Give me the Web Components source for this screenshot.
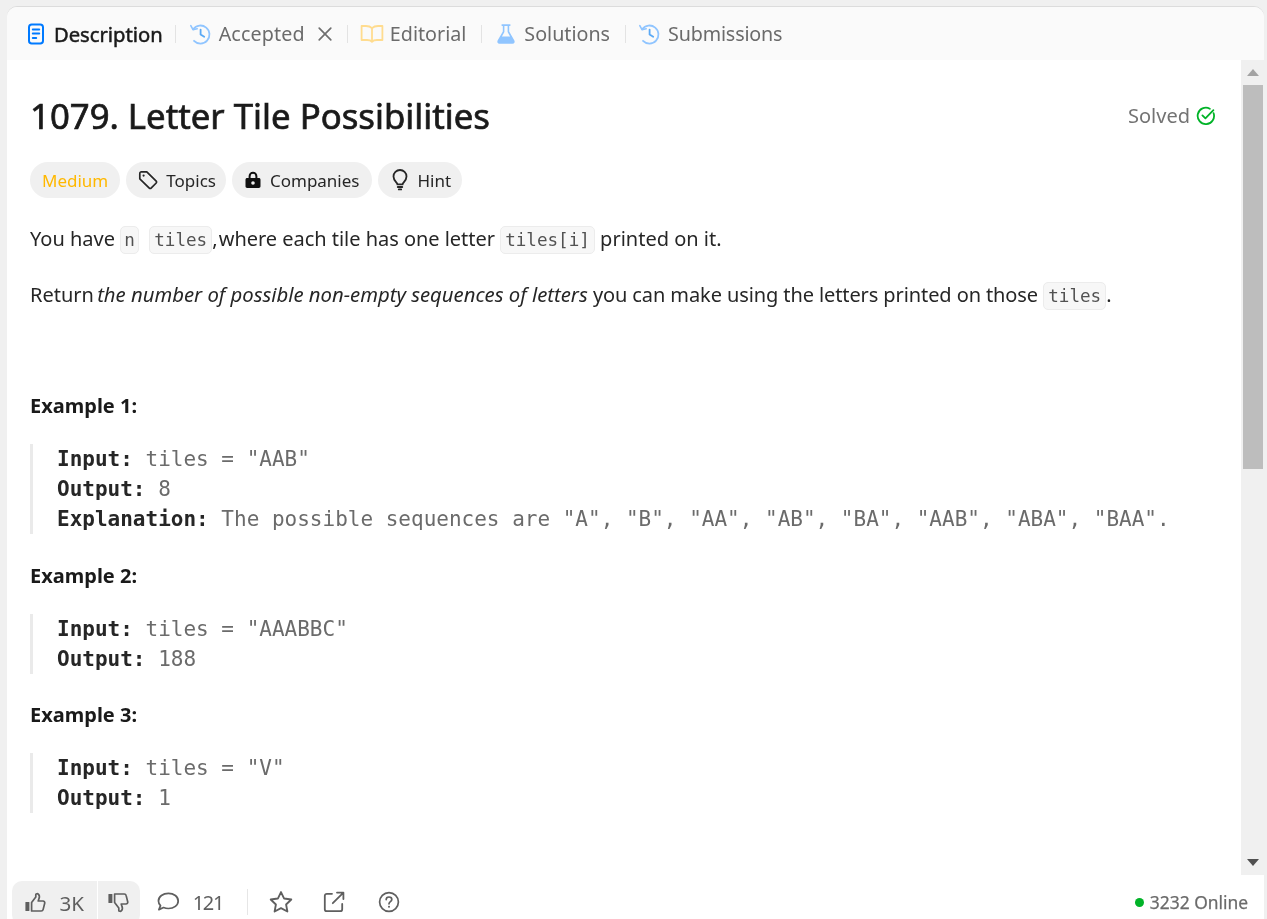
<!DOCTYPE html>
<html>
<head>
<meta charset="utf-8">
<title>Letter Tile Possibilities</title>
<style>
  html, body { margin: 0; height: 100%; overflow: hidden; background: #f0f0f0; }
  body { font-family: "Noto Sans", "Open Sans", sans-serif; }
</style>
</head>
<body>
<lc-panel>
  <lc-tab slot="tabs" label="Description" icon="desc" active></lc-tab>
  <lc-tab slot="tabs" label="Accepted" icon="history" closable divider style="--before:12px;letter-spacing:.15px"></lc-tab>
  <lc-tab slot="tabs" label="Editorial" icon="book" divider style="--before:14px;--after:12px;--icon-gap:6px"></lc-tab>
  <lc-tab slot="tabs" label="Solutions" icon="flask" divider style="--after:14px"></lc-tab>
  <lc-tab slot="tabs" label="Submissions" icon="history" divider style="--after:12px;letter-spacing:-.15px"></lc-tab>

  <lc-title>1079. Letter Tile Possibilities</lc-title>
  <lc-pills>
    <lc-pill tone="medium">Medium</lc-pill>
    <lc-pill icon="tag" style="padding-right:10px">Topics</lc-pill>
    <lc-pill icon="lock" style="padding-right:12px">Companies</lc-pill>
    <lc-pill icon="bulb">Hint</lc-pill>
  </lc-pills>
  <lc-para>You have <lc-code style="padding:0 3px">n</lc-code>&nbsp; <lc-code>tiles</lc-code><span style="margin-right:-4px">,</span> <span style="letter-spacing:-.03px">where each tile has one letter</span> <lc-code>tiles[i]</lc-code> printed on it.</lc-para>
  <lc-para>Return <em style="font-size:20.3px;line-height:1;margin-left:-2px">the number of possible non-empty sequences of letters</em> <span style="letter-spacing:-.1px">you can make using the letters printed on those</span> <lc-code>tiles</lc-code>.</lc-para>

  <lc-example heading="Example 1:" style="margin-top:82px">
    <b>Input:</b> tiles = "AAB"
<b>Output:</b> 8
<b>Explanation:</b> The possible sequences are "A", "B", "AA", "AB", "BA", "AAB", "ABA", "BAA".</lc-example>
  <lc-example heading="Example 2:">
    <b>Input:</b> tiles = "AAABBC"
<b>Output:</b> 188</lc-example>
  <lc-example heading="Example 3:">
    <b>Input:</b> tiles = "V"
<b>Output:</b> 1</lc-example>

  <lc-footer slot="footer"></lc-footer>
</lc-panel>

<script>
const ICONS = {
  desc: `<svg width="20" height="22" viewBox="0 0 20 22" fill="none" stroke="#007aff" stroke-width="2" stroke-linecap="round"><rect x="3" y="1.5" width="14" height="19" rx="2.8"/><path d="M6.8 6.5h6.4M6.8 10.500h6.400M6.800 15h3.400"/></svg>`,
  history: `<svg width="22" height="22" viewBox="0 0 22 22" fill="none" stroke="#90c5ff" stroke-width="1.8" stroke-linecap="round" stroke-linejoin="round"><path d="M4.200 6.200A9 9 0 1 1 5 17.800"/><path d="M1.800 2.600l2.200 4 4.200-.9" stroke-width="1.6"/><path d="M11.600 6.600v5l3.600 2.200" stroke="#5aa9f5"/></svg>`,
  book: `<svg width="24" height="20" viewBox="0 0 24 20" fill="none" stroke="#ffdc8f" stroke-width="1.8" stroke-linejoin="round"><path d="M12 4.200C10.600 2.800 8.400 2 6 2H1.600v14H7c2.200 0 4 .6 5 1.800 1-1.200 2.800-1.800 5-1.800h5.400V2H18c-2.400 0-4.600.8-6 2.200zM12 4.200v13.600"/></svg>`,
  flask: `<svg width="20" height="22" viewBox="0 0 20 22"><path d="M5.600 1.200h8.800v1.800h-1.200v5.400l5.200 9.200c.8 1.500-.1 3.200-1.900 3.200H3.500c-1.800 0-2.700-1.700-1.900-3.200l5.200-9.200V3H5.600z" fill="#90c5ff"/><path d="M8.400 3v5.900L5.900 13.400h8.200L11.600 8.900V3z" fill="#fafafa"/></svg>`,
  close: `<svg width="16" height="16" viewBox="0 0 16 16" fill="none" stroke="#6f6f6f" stroke-width="1.7" stroke-linecap="round"><path d="M2.200 2.200l11.600 11.600M13.800 2.200L2.200 13.800"/></svg>`,
  tag: `<svg width="20" height="20" viewBox="0 0 20 20" fill="none" stroke="#262626" stroke-width="1.7" stroke-linejoin="round"><path d="M1.800 3.400c0-.9.7-1.600 1.600-1.600h5.400l9.400 9.400c.5.5.5 1.300 0 1.800l-5.100 5.100c-.5.5-1.300.5-1.800 0L1.800 8.800z"/><circle cx="5.600" cy="5.600" r="1.100" fill="#262626" stroke="none"/></svg>`,
  lock: `<svg width="18" height="18" viewBox="0 0 18 18"><path fill-rule="evenodd" d="M4.600 7V5.200a4.400 4.400 0 0 1 8.800 0V7h1.400c1 0 1.700.7 1.700 1.700v6.600c0 1-.7 1.700-1.700 1.700H3.200c-1 0-1.700-.7-1.700-1.700V8.700c0-1 .7-1.700 1.700-1.700zm2 0h4.800V5.200a2.400 2.400 0 0 0-4.800 0zM9 10.200a1.800 1.800 0 1 0 0 3.600 1.800 1.800 0 0 0 0-3.600z" fill="#111"/></svg>`,
  bulb: `<svg width="20" height="22" viewBox="0 0 20 22" fill="none" stroke="#262626" stroke-width="1.8" stroke-linecap="round" stroke-linejoin="round"><path d="M7.400 15.400c0-1.800-3.900-3.600-3.900-7.900a6.500 6.500 0 0 1 13 0c0 4.300-3.900 6.100-3.900 7.900z"/><path d="M7.800 18h4.400" stroke-width="2"/><path d="M8.800 20.400h2.400" stroke-width="1.8"/></svg>`,
  up: `<svg width="24" height="24" viewBox="0 0 24 24" fill="none" stroke="#5f5f5f" stroke-width="1.7" stroke-linejoin="round" stroke-linecap="round"><path d="M8.600 11.400L12.800 6V3.600c0-.9 1.700-1.300 2.700-.3 1 1 1.100 2.700.5 4.300L15.200 10H20c1.200 0 2 1 1.700 2.200l-1.600 6.400c-.2.900-1 1.400-1.900 1.400H8.600z"/><rect x="2.400" y="11" width="4" height="9" rx=".6" fill="#5f5f5f" stroke="none"/></svg>`,
  down: `<svg width="24" height="24" viewBox="0 0 24 24" fill="none" stroke="#5f5f5f" stroke-width="1.7" stroke-linejoin="round" stroke-linecap="round"><path d="M8.600 12.600L12.800 18v2.400c0 .9 1.700 1.300 2.700.3 1-1 1.100-2.700.5-4.300L15.200 14H20c1.200 0 2-1 1.700-2.200l-1.600-6.400C19.900 4.500 19.100 4 18.200 4H8.600z"/><rect x="2.400" y="4" width="4" height="9" rx=".6" fill="#5f5f5f" stroke="none"/></svg>`,
  comment: `<svg width="26" height="26" viewBox="0 0 24 24" fill="none" stroke="#5f5f5f" stroke-width="1.6" stroke-linejoin="round"><path d="M12.400 4c5 0 9 3 9 7s-4 7-9 7c-1.600 0-3.200-.3-4.500-.9L3.600 19l1.500-3.700C3.800 14 3.200 12.600 3.200 11c0-4 4.200-7 9.200-7z"/></svg>`,
  star: `<svg width="26" height="26" viewBox="0 0 24 24" fill="none" stroke="#5f5f5f" stroke-width="1.7" stroke-linejoin="round"><path d="M12 2.800l2.900 6 6.600.9-4.800 4.600 1.200 6.500L12 17.700l-5.900 3.100 1.200-6.500-4.800-4.600 6.600-.9z"/></svg>`,
  share: `<svg width="24" height="24" viewBox="0 0 24 24" fill="none" stroke="#5f5f5f" stroke-width="1.8" stroke-linecap="round" stroke-linejoin="round"><path d="M10 3.800H4.800a2 2 0 0 0-2 2v13.400a2 2 0 0 0 2 2h13.400a2 2 0 0 0 2-2V14"/><path d="M15 2.600h6.400V9M21.400 2.600L10.800 13.200"/></svg>`,
  help: `<svg width="24" height="24" viewBox="0 0 24 24" fill="none" stroke="#5f5f5f" stroke-width="1.7" stroke-linecap="round"><circle cx="12" cy="12" r="9.400"/><path d="M9.200 9.600c0-1.600 1.300-2.600 2.800-2.600s2.800 1 2.800 2.400c0 2.200-2.800 2.200-2.800 4.400"/><circle cx="12" cy="16.800" r="1" fill="#5f5f5f" stroke="none"/></svg>`,
  check: `<svg width="20" height="20" viewBox="0 0 20 20" fill="none" stroke="#01b328" stroke-width="1.8" stroke-linecap="round" stroke-linejoin="round"><path d="M17.600 7.200A8.200 8.200 0 1 1 13.800 2.700"/><path d="M6.400 9.400l3 3 8-8.200"/></svg>`
};

const MONO = `"DejaVu Sans Mono", "Liberation Mono", monospace`;

// small helper so every element below reads the same
function define(name, css, html, setup) {
  customElements.define(name, class extends HTMLElement {
    constructor() {
      super();
      this.attachShadow({ mode: "open" });
      this.shadowRoot.innerHTML = `<style>${css}</style>${typeof html === "function" ? html(this) : html}`;
    }
    connectedCallback() {
      if (setup) setup(this);
    }
  });
}

define("lc-panel", `
  :host { display: flex; flex-direction: column; position: fixed; inset: 7px 3px -40px 7px; background: #fff;
          border-radius: 10px 10px 0 0; overflow: hidden; box-shadow: 0 -1px 0 #dcdcdc; }
  #tabs { display: flex; align-items: center; height: 53px; flex: none; background: #fafafa; padding-left: 18px; }
  #middle { flex: 1; display: flex; min-height: 0; }
  #content { flex: 1; padding: 0 25px 0 23px; min-width: 0; }
  #track { width: 23px; flex: none; background: #f0f0f0; display: flex; flex-direction: column; align-items: stretch; }
  .arrow { height: 25px; flex: none; display: flex; align-items: center; justify-content: center; }
  #thumb { height: 384px; flex: none; background: #bdbdbd; margin: 0 1px 0 2px; }
  #spacer { flex: 1; }
  #foot { flex: none; height: 84px; }
`, `
  <div id="tabs"><slot name="tabs"></slot></div>
  <div id="middle">
    <div id="content"><slot></slot></div>
    <div id="track">
      <div class="arrow"><svg width="12" height="7" viewBox="0 0 12 7"><path d="M6 0l6 7H0z" fill="#a3a3a3"/></svg></div>
      <div id="thumb"></div>
      <div id="spacer"></div>
      <div class="arrow"><svg width="12" height="7" viewBox="0 0 12 7"><path d="M6 7l6-7H0z" fill="#505050"/></svg></div>
    </div>
  </div>
  <div id="foot"><slot name="footer"></slot></div>
`);

define("lc-tab", `
  :host { display: flex; align-items: center; font-size: 19.7px; color: #6b6b6b; height: 20px; }
  :host([divider])::before { content: ""; width: 1px; height: 18px; background: #e3e3e3; margin: 0 var(--after, 13px) 0 var(--before, 15px); }
  :host([active]) { color: #1a1a1a; font-size: 20.2px; padding-left: 1px; -webkit-text-stroke: .5px #1a1a1a; }
  .ic { display: flex; margin-right: var(--icon-gap, 8px); }
  .x { display: flex; margin-left: 12px; }
`, self => `
  <span class="ic">${ICONS[self.getAttribute("icon")]}</span>
  <span>${self.getAttribute("label")}</span>
  ${self.hasAttribute("closable") ? `<span class="x">${ICONS.close}</span>` : ""}
`);

define("lc-title", `
  :host { display: block; font-size: 34.75px; line-height: 42px; color: #1a1a1a; padding-top: 35px; position: relative; -webkit-text-stroke: .7px #1a1a1a; }
  #solved { position: absolute; right: 0; top: 37px; height: 38px; display: flex; align-items: center; gap: 6px; font-size: 20px; color: #737373; -webkit-text-stroke: 0; }
`, `<slot></slot><span id="solved">Solved ${ICONS.check}</span>`);

define("lc-pills", `
  :host { display: flex; gap: 6px; margin-top: 25px; }
`, `<slot></slot>`);

define("lc-pill", `
  :host { display: flex; align-items: center; height: 36px; padding: 0 11px 0 12px; gap: 8px; border-radius: 18px; background: #f0f0f0; font-size: 17px; color: #262626; }
  :host([tone="medium"]) { color: #ffb800; padding: 0 12px; }
  span { display: flex; }
`, self => `${self.hasAttribute("icon") ? `<span>${ICONS[self.getAttribute("icon")]}</span>` : ""}<slot></slot>`);

define("lc-para", `
  :host { display: block; font-size: 20px; line-height: 28px; color: #262626; margin-top: 27px; }
`, `<slot></slot>`);

define("lc-code", `
  :host { display: inline-block; font-family: ${MONO}; font-size: 17.6px; line-height: 26px; padding: 0 4px; color: #525252; background: #f7f7f7; border: 1px solid #ececec; border-radius: 5px; }
`, `<slot></slot>`);

define("lc-example", `
  :host { display: block; color: #1a1a1a; margin-top: 27.5px; }
  h4 { margin: 0; font-size: 20px; line-height: 28px; font-weight: 700; }
  pre { margin: 24px 0 0; border-left: 3px solid #eaeaea; padding-left: 24px; font-family: ${MONO}; font-size: 21px; line-height: 30px; color: #6b6b6b; }
  ::slotted(b) { color: #262626; font-weight: 700; }
`, self => `<h4>${self.getAttribute("heading")}</h4><pre><slot></slot></pre>`, self => {
  // drop the source indent in front of the first line
  const first = self.firstChild;
  if (first && first.nodeType === 3) first.textContent = first.textContent.replace(/^\s+/, "");
});

define("lc-footer", `
  :host { display: flex; align-items: flex-start; padding: 6px 16px 0 5px; font-size: 20px; color: #5f5f5f; }
  #votes { display: flex; height: 44px; border-radius: 10px; background: #f0f0f0; overflow: hidden; }
  #votes div { display: flex; align-items: center; }
  #up { padding: 0 12.5px 1px 10.6px; gap: 13px; border-right: 1px solid #fff; font-size: 20.6px; }
  #down { padding: 0 10px 2px 8px; }
  .act { display: flex; align-items: center; height: 42px; }
  #comments { margin-left: 15.5px; gap: 11.5px; letter-spacing: -1.3px; }
  .sep { width: 1px; height: 26px; background: #e6e6e6; margin: 8px 20px 0 24px; }
  #online { margin-left: auto; display: flex; align-items: center; height: 42px; gap: 6px; font-size: 17.4px; color: #6b6b6b; -webkit-text-stroke: .25px #6b6b6b; }
  #online i { width: 9px; height: 9px; border-radius: 50%; background: #01b328; }
  #share { margin-left: 28px; }
  #help { margin-left: 30.5px; }
`, `
  <div id="votes">
    <div id="up">${ICONS.up}<span>3K</span></div>
    <div id="down">${ICONS.down}</div>
  </div>
  <div class="act" id="comments">${ICONS.comment}<span>121</span></div>
  <div class="sep"></div>
  <div class="act">${ICONS.star}</div>
  <div class="act" id="share">${ICONS.share}</div>
  <div class="act" id="help">${ICONS.help}</div>
  <div id="online"><i></i>3232 Online</div>
`);
</script>
</body>
</html>
